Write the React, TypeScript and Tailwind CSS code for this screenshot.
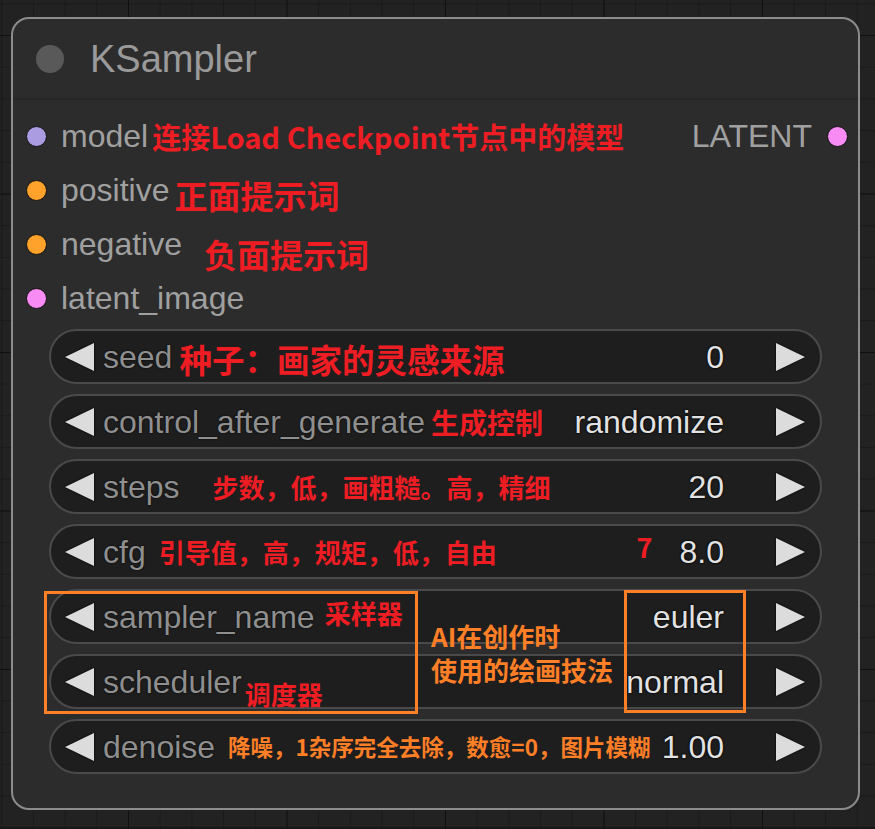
import type { ReactNode } from 'react'

const ui = "font-['Liberation_Sans',Arial,sans-serif]"
const cjk = "font-['Noto_Sans_CJK_SC','Noto_Sans',sans-serif] font-bold leading-none"

function Dot({ color }: { color: string }) {
  return <span className={`block w-[21px] h-[21px] rounded-full border border-[#111] shrink-0 ${color}`} />
}

function Arrow({ dir }: { dir: 'left' | 'right' }) {
  return (
    <svg width="29" height="28" viewBox="0 0 29 28" className="shrink-0 drop-shadow-[0_0_1px_#000]">
      {dir === 'left' ? (
        <polygon points="0,14 29,0 29,28" fill="#dcdcdc" />
      ) : (
        <polygon points="29,14 0,0 0,28" fill="#dcdcdc" />
      )}
    </svg>
  )
}

function Widget({ label, value, children, before }: { label: string; value: string; children?: ReactNode; before?: ReactNode }) {
  return (
    <div className="h-[55px] rounded-full border-2 border-[#4a4a4a] bg-[#1e1e1e] flex items-center pl-[14px] pr-[15px]">
      <Arrow dir="left" />
      <span className="ml-[9px] text-[32px] leading-none text-[#8f8f8f] [text-shadow:0_0_2px_#000]">{label}</span>
      {children}
      <span className="flex-1" />
      {before}
      <span className="text-[32px] leading-none text-[#e2e2e2] [text-shadow:0_0_2px_#000,0_0_2px_#000]">{value}</span>
      <span className="ml-[52px]">
        <Arrow dir="right" />
      </span>
    </div>
  )
}

export default function App() {
  return (
    <div
      className={`relative w-[875px] h-[829px] overflow-hidden bg-[#222] pt-[17px] pl-[11px] ${ui} [background-image:linear-gradient(to_right,#101010_1px,transparent_1px),linear-gradient(to_bottom,#101010_1px,transparent_1px),linear-gradient(to_right,#1a1a1a_1px,transparent_1px),linear-gradient(to_bottom,#1a1a1a_1px,transparent_1px)] [background-size:158.5px_158.5px,158.5px_158.5px,31.7px_31.7px,31.7px_31.7px] [background-position:128px_35px,128px_35px,128px_35px,128px_35px]`}
    >
      {/* Node */}
      <div className="w-[849px] h-[793px] rounded-[18px] border-2 border-[#8c8c8c] bg-[#2c2c2c] flex flex-col overflow-hidden">
        {/* Title */}
        <div className="h-[81px] shrink-0 flex items-center pl-[23px] border-b-2 border-[#262626]">
          <span className="block w-[28px] h-[28px] rounded-full bg-[#595959]" />
          <span className="ml-[26px] text-[38px] leading-none text-[#9a9a9a]">KSampler</span>
        </div>

        {/* Inputs / output */}
        <div className="pt-[9px] pl-[13px] pr-[10px] flex flex-col">
          <div className="h-[54px] flex items-center">
            <Dot color="bg-[#ab9be0]" />
            <span className="ml-[14px] text-[32px] leading-none text-[#a0a0a0]">model</span>
            <span className={`ml-[4px] text-[29px] text-[#ee1d23] ${cjk}`}>连接Load Checkpoint节点中的模型</span>
            <span className="flex-1" />
            <span className="text-[32px] leading-none text-[#a0a0a0]">LATENT</span>
            <span className="ml-[15px]">
              <Dot color="bg-[#f98cf4]" />
            </span>
          </div>
          <div className="h-[54px] flex items-center">
            <Dot color="bg-[#ffa22c]" />
            <span className="ml-[14px] text-[32px] leading-none text-[#a0a0a0]">positive</span>
            <span className={`ml-[5px] mt-[10px] text-[33px] text-[#ee1d23] ${cjk}`}>正面提示词</span>
          </div>
          <div className="h-[54px] flex items-center">
            <Dot color="bg-[#ffa22c]" />
            <span className="ml-[14px] text-[32px] leading-none text-[#a0a0a0]">negative</span>
            <span className={`ml-[22px] mt-[20px] text-[33px] text-[#ee1d23] ${cjk}`}>负面提示词</span>
          </div>
          <div className="h-[54px] flex items-center">
            <Dot color="bg-[#f98cf4]" />
            <span className="ml-[14px] text-[32px] leading-none text-[#a0a0a0]">latent_image</span>
          </div>
        </div>

        {/* Widgets */}
        <div className="mt-[4px] px-[36px] flex flex-col gap-[10px]">
          <Widget label="seed" value="0">
            <span className={`ml-[7px] mt-[5px] text-[32.5px] text-[#ee1d23] ${cjk}`}>种子：画家的灵感来源</span>
          </Widget>
          <Widget label="control_after_generate" value="randomize">
            <span className={`ml-[6px] text-[28px] text-[#ee1d23] ${cjk}`}>生成控制</span>
          </Widget>
          <Widget label="steps" value="20">
            <span className={`ml-[33px] text-[26px] text-[#ee1d23] ${cjk}`}>步数，低，画粗糙。高，精细</span>
          </Widget>
          <Widget
            label="cfg"
            value="8.0"
            before={<span className={`mr-[27px] mb-[10px] text-[27px] text-[#ee1d23] ${cjk}`}>7</span>}
          >
            <span className={`ml-[13px] text-[26px] text-[#ee1d23] ${cjk}`}>引导值，高，规矩，低，自由</span>
          </Widget>
          <Widget label="sampler_name" value="euler">
            <span className={`ml-[10px] mb-[8px] text-[26px] text-[#ee1d23] ${cjk}`}>采样器</span>
          </Widget>
          <Widget label="scheduler" value="normal">
            <span className={`ml-[3px] mt-[25px] text-[26px] text-[#ee1d23] ${cjk}`}>调度器</span>
          </Widget>
          <Widget label="denoise" value="1.00">
            <span className={`ml-[13px] text-[22.5px] text-[#ff7f27] ${cjk}`}>降噪，1杂序完全去除，数愈=0，图片模糊</span>
          </Widget>
        </div>
      </div>

      {/* Annotation overlays */}
      <div className="absolute left-[44px] top-[591px] w-[374px] h-[123px] border-[3px] border-[#ff7f27]" />
      <div className="absolute left-[624px] top-[590px] w-[122px] h-[123px] border-[3px] border-[#ff7f27]" />
      <div className={`absolute left-[431px] top-[619px] text-[26px] !leading-[34px] text-[#ff7f27] ${cjk}`}>
        <div>AI在创作时</div>
        <div>使用的绘画技法</div>
      </div>
    </div>
  )
}
